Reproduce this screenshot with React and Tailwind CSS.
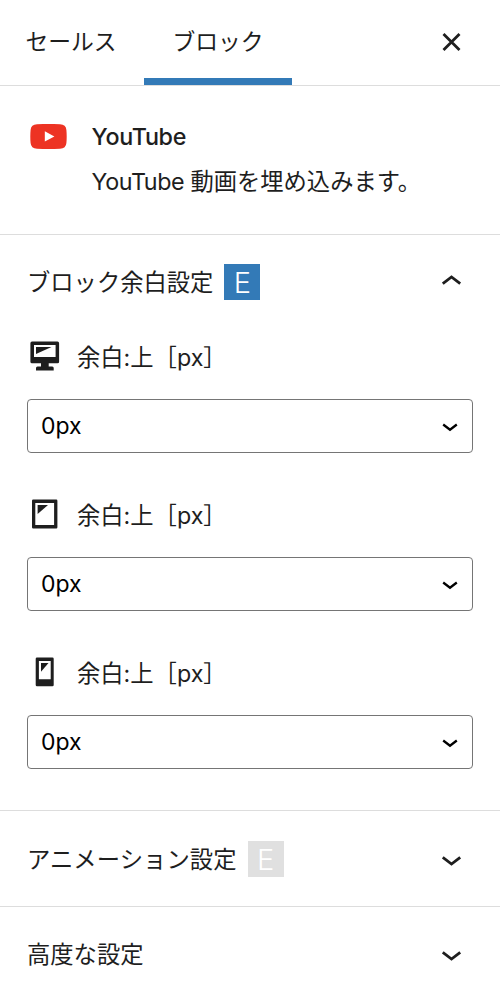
import { useState } from 'react';

const devices = [
  { id: 'pc', Icon: DesktopIcon },
  { id: 'tab', Icon: TabletIcon },
  { id: 'sp', Icon: MobileIcon },
];

const SIZES = ['0px', '10px', '20px', '30px', '40px', '50px'];

function DesktopIcon() {
  return (
    <svg width="30" height="30" viewBox="0 0 30 30" fill="currentColor">
      <path fillRule="evenodd" d="M2 .6h25.500q1.600 0 1.600 1.600v18.500q0 1.600-1.600 1.600H2Q.400 22.300.400 20.700V2.200Q.400.600 2 .6zM4 4v12h21.600V4z" />
      <path d="M6 6h15.500L6 13z" />
      <path d="M11 22h7.700v3.500h3.500q1.500 0 1.500 1.500v2.400H6V27q0-1.500 1.500-1.500H11z" />
    </svg>
  );
}

function TabletIcon() {
  return (
    <svg width="30" height="30" viewBox="0 0 30 30" fill="currentColor">
      <path fillRule="evenodd" d="M3.200.5h23q1.200 0 1.200 1.200v26.600q0 1.200-1.200 1.200h-23Q2 29.500 2 28.300V1.700Q2 .5 3.200.5zM5.300 3.900v22.200H24.100V3.900z" />
      <path d="M7.600 6h10.400L7.600 15z" />
    </svg>
  );
}

function MobileIcon() {
  return (
    <svg width="30" height="30" viewBox="0 0 30 30" fill="currentColor">
      <path fillRule="evenodd" d="M7 .5h15.400q1.300 0 1.300 1.300V28q0 1.300-1.300 1.300H7Q5.700 29.300 5.700 28V1.800Q5.700.5 7 .5zM8.900 3.900V22.200H20.700V3.900z" />
      <path d="M11 6h7.500L11 14.800z" />
    </svg>
  );
}

function Chevron({ open }) {
  return (
    <svg className="mr-[11px] ml-auto" width="20" height="12" viewBox="0 0 20 12" fill="none" stroke="currentColor" strokeWidth="2.800">
      {open ? <path d="M.800 9.700l8.700-6.700 8.700 6.700" /> : <path d="M.800 2.300l8.700 6.700 8.700-6.700" />}
    </svg>
  );
}

function Badge({ active }) {
  return (
    <span
      className={`ml-[11px] flex size-9 justify-center pt-[1px] text-[29px] leading-9 font-light text-white font-['Inter',sans-serif] ${
        active ? 'bg-[#337ab7]' : 'bg-[#e0e0e0]'
      }`}
    >
      E
    </span>
  );
}

function MarginField({ Icon }) {
  const [value, setValue] = useState('0px');

  return (
    <div className="mb-[46px]">
      <div className="flex h-[30px] items-center pl-[3px]">
        <Icon />
        <span className="ml-[17px] pt-1 whitespace-pre">余白:上［px］</span>
      </div>
      <div className="relative mt-[28px] h-[54px]">
        <select
          value={value}
          onChange={(e) => setValue(e.target.value)}
          className="h-full w-full appearance-none rounded-[4px] border border-[#757575] bg-white pl-[13px] text-[23px] text-black"
        >
          {SIZES.map((size) => (
            <option key={size} value={size}>{size}</option>
          ))}
        </select>
        <svg className="pointer-events-none absolute top-[23px] right-[15px] text-black" width="16" height="10" viewBox="0 0 16 10" fill="none" stroke="currentColor" strokeWidth="2.3">
          <path d="M1.200 2.500l6.800 5.200L14.800 2.500" />
        </svg>
      </div>
    </div>
  );
}

export default function App() {
  return (
    <div className="h-[984px] w-[500px] overflow-hidden bg-white text-[23.3px] text-[#1e1e1e] font-['Inter','Noto_Sans_CJK_JP',sans-serif]">
      <header className="flex h-[86px] border-b border-[#ddd] text-[22.8px]">
        <button className="w-36 pr-[2px] text-center">セールス</button>
        <button className="w-[148px] border-b-[7px] border-[#337ab7] pt-[7px]">ブロック</button>
        <button className="ml-auto pr-[39px] pb-[2px]" aria-label="閉じる">
          <svg width="19" height="18" viewBox="0 0 19 18" fill="none" stroke="currentColor" strokeWidth="2.800">
            <path d="M1.500 1l16 16M17.500 1l-16 16" />
          </svg>
        </button>
      </header>

      <section className="flex h-[149px] border-b border-[#ddd] pt-[28px] pl-[30px]">
        <svg className="mt-[10px]" width="37" height="26" viewBox="0 0 37 26">
          <path d="M7 .200Q18.500-.300 30 .200Q36 .400 36.400 6Q37 12.500 36.400 19Q36 24.600 30 24.800Q18.500 25.300 7 24.800Q1 24.600 .600 19Q0 12.500 .600 6Q1 .400 7 .200z" fill="#ed3323" />
          <path d="M14.800 7.200v10.400l9.600-5.200z" fill="#fff" />
        </svg>
        <div className="ml-[24.5px]">
          <h2 className="h-[45px] leading-[46px] font-medium tracking-[-0.3px]">YouTube</h2>
          <p className="h-[45px] leading-[45px]">
            <span className="tracking-[-0.4px]">YouTube </span>動画を埋め込みます。
          </p>
        </div>
      </section>

      <section className="h-[576px] border-b border-[#ddd] px-[27px] pt-[29px]">
        <div className="mb-[41px] flex h-9 items-center">
          <span className="pt-[2px]">ブロック余白設定</span>
          <Badge active />
          <span className="ml-auto flex pb-[4px]"><Chevron open /></span>
        </div>
        {devices.map(({ id, Icon }) => (
          <MarginField key={id} Icon={Icon} />
        ))}
      </section>

      <section className="flex h-24 items-center border-b border-[#ddd] px-[27px]">
        <span className="pt-1 tracking-[0.1px]">アニメーション設定</span>
        <Badge />
        <span className="ml-auto flex pt-[4px]"><Chevron /></span>
      </section>

      <section className="flex h-24 items-center px-[27px]">
        <span>高度な設定</span>
        <span className="ml-auto flex pt-[2px]"><Chevron /></span>
      </section>
    </div>
  );
}
